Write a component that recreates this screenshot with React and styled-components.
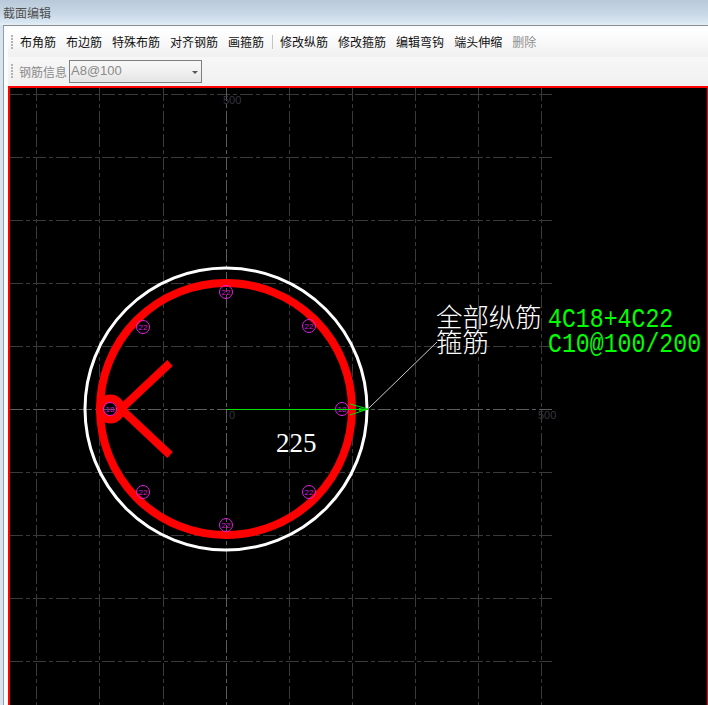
import React from 'react';
import styled, { createGlobalStyle } from 'styled-components';

const GlobalStyle = createGlobalStyle`
  html, body {
    margin: 0;
    padding: 0;
    height: 100%;
    overflow: hidden;
    background: #d6e4f1;
  }
`;

const CJK = '"Noto Sans CJK SC", sans-serif';

const Page = styled.div`
  width: 708px;
  height: 705px;
  display: flex;
  flex-direction: column;
  overflow: hidden;
  background: #d6e4f1;
  font-family: ${CJK};
`;

const TitleBar = styled.div`
  flex: 0 0 25px;
  display: flex;
  align-items: center;
  padding: 0 0 1px 3px;
  box-sizing: border-box;
  font-size: 12px;
  color: #4f4f4f;
  background: linear-gradient(to bottom, #bac9d9 0%, #c9d8e6 55%, #d9e7f3 90%, #e6f0f8 100%);
`;

const Frame = styled.div`
  flex: 1;
  min-height: 0;
  margin-left: 3px;
  display: flex;
  flex-direction: column;
  border-top: 1px solid #8c8c8c;
  border-left: 1px solid #9a9a9a;
  padding: 3px 0 0 4px;
  background: #fbfcfd;
`;

const ToolRow = styled.div`
  display: flex;
  align-items: center;
  height: ${({ $height }) => $height}px;
  flex: none;
  padding: 0 0 ${({ $top }) => ($top ? 2 : 0)}px 3px;
  box-sizing: border-box;
  background: ${({ $top }) => ($top
    ? 'linear-gradient(to bottom, #ffffff 0%, #f9f9f9 45%, #f0f0f0 100%)'
    : 'linear-gradient(to bottom, #f7f7f7 0%, #f0f0f0 100%)')};
`;

const Grip = styled.span`
  flex: none;
  width: 2px;
  height: 15px;
  margin-right: 2px;
  background: repeating-linear-gradient(to bottom, #b4b4b4 0 2px, transparent 2px 3px);
`;

const ToolItem = styled.span`
  flex: none;
  padding: 0 5px;
  font-size: 12px;
  line-height: 16px;
  color: ${({ $disabled }) => ($disabled ? '#8f8f8f' : '#101010')};
`;

const Separator = styled.span`
  flex: none;
  width: 1px;
  height: 14px;
  margin: 0 2px 0 3px;
  background: #c4c4c4;
`;

const Label = styled.span`
  flex: none;
  width: 54px;
  padding-left: 4px;
  box-sizing: border-box;
  font-size: 12px;
  color: #8a8a8a;
  white-space: nowrap;
`;

const Combo = styled.div`
  flex: none;
  width: 133px;
  height: 23px;
  box-sizing: border-box;
  border: 1px solid #7f7f7f;
  display: flex;
  align-items: center;
  justify-content: space-between;
  padding: 0 3px 2px 1px;
  font-family: "Liberation Sans", sans-serif;
  font-size: 13px;
  color: #8a8a8a;
  background: linear-gradient(to bottom, #f8f8f8 0%, #f0f0f0 50%, #e4e4e4 100%);
`;

const ComboArrow = styled.span`
  width: 0;
  height: 0;
  margin-top: 3px;
  border-left: 3px solid transparent;
  border-right: 3px solid transparent;
  border-top: 3px solid #555;
`;

const Viewport = styled.div`
  flex: 1;
  min-height: 0;
  border-top: 2px solid #ff0000;
  border-left: 2px solid #ff0000;
  border-right: 1px solid #ff0000;
  background: #000;
  overflow: hidden;
`;

const Drawing = styled.svg`
  display: block;
`;

const AxisLabel = styled.text`
  font-family: "Liberation Sans", sans-serif;
  font-size: 11px;
  fill: #34383e;
`;

const BarLabel = styled.text`
  font-family: "Liberation Sans", sans-serif;
  font-size: 8px;
  fill: #d818d8;
  text-anchor: middle;
`;

const NoteName = styled.text`
  font-family: ${CJK};
  font-size: 26.4px;
  font-weight: 300;
  fill: #ffffff;
`;

const NoteValue = styled.text`
  font-family: "Liberation Mono", monospace;
  font-size: 23.2px;
  fill: #00ff00;
`;

const Dimension = styled.text`
  font-family: "Liberation Serif", serif;
  font-size: 27px;
  fill: #ffffff;
`;

const tools = ['布角筋', '布边筋', '特殊布筋', '对齐钢筋', '画箍筋', null, '修改纵筋', '修改箍筋', '编辑弯钩', '端头伸缩'];

const gridX = [36, 99, 163, 226, 289, 352, 415, 478, 541];
const gridY = [94, 157, 220, 283, 346, 409, 472, 535, 598, 661];

const bars = [
  { x: 226, y: 292, d: 22 },
  { x: 309, y: 326, d: 22 },
  { x: 342, y: 409, d: 18 },
  { x: 309, y: 492, d: 22 },
  { x: 226, y: 525, d: 22 },
  { x: 143, y: 492, d: 22 },
  { x: 143, y: 327, d: 22 },
  { x: 110, y: 409, d: 18 },
];

const Section = () => (
  <Drawing width="697" height="617" viewBox="10 88 697 617">
    {gridY.map((y) => (
      <line key={y} x1="10" x2="552" y1={y + 0.5} y2={y + 0.5}
        stroke={y === 409 ? '#5c5c5c' : '#3a3a3a'} strokeDasharray="13 3 4 3" />
    ))}
    {gridX.map((x) => (
      <line key={x} x1={x + 0.5} x2={x + 0.5} y1="88" y2="705"
        stroke={x === 226 ? '#5c5c5c' : '#3a3a3a'} strokeDasharray="13 3 4 3" />
    ))}

    <AxisLabel x="223" y="104">500</AxisLabel>
    <AxisLabel x="229" y="419">0</AxisLabel>
    <AxisLabel x="538" y="419">500</AxisLabel>

    <circle cx="226" cy="409" r="141" fill="none" stroke="#ffffff" strokeWidth="3" />
    <circle cx="226" cy="409" r="126" fill="none" stroke="#ff0000" strokeWidth="8" />

    <circle cx="110.5" cy="409" r="10.5" fill="none" stroke="#ff0000" strokeWidth="8" />
    <path d="M170 363 L121 409 L170 455" fill="none" stroke="#ff0000" strokeWidth="8" strokeLinejoin="miter" />

    {bars.map((b) => (
      <g key={`${b.x}-${b.y}`}>
        <circle cx={b.x} cy={b.y} r="6.5" fill="none" stroke="#e020e0" strokeWidth="1" />
        <BarLabel x={b.x} y={b.y + 3}>{b.d}</BarLabel>
      </g>
    ))}

    <line x1="226" x2="368" y1="409.5" y2="409.5" stroke="#00e000" />
    <path d="M350 404 L368 409 L350 415" fill="none" stroke="#00e000" />
    <path d="M359 408 L369 409.5 L359 411 Z" fill="#00e000" />
    <line x1="369" y1="408" x2="437" y2="342" stroke="#ffffff" strokeWidth="0.8" />

    <NoteName x="436" y="327">全部纵筋</NoteName>
    <NoteName x="436" y="352">箍筋</NoteName>
    <NoteValue transform="translate(548 327) scale(1 1.2)">4C18+4C22</NoteValue>
    <NoteValue transform="translate(548 352) scale(1 1.2)">C10@100/200</NoteValue>
    <Dimension x="276" y="452">225</Dimension>
  </Drawing>
);

export default function App() {
  return (
    <Page>
      <GlobalStyle />
      <TitleBar>截面编辑</TitleBar>
      <Frame>
        <ToolRow $top $height={28}>
          <Grip />
          {tools.map((t, i) => (t ? <ToolItem key={t}>{t}</ToolItem> : <Separator key={i} />))}
          <ToolItem $disabled>删除</ToolItem>
        </ToolRow>
        <ToolRow $height={29}>
          <Grip />
          <Label>钢筋信息</Label>
          <Combo>
            A8@100
            <ComboArrow />
          </Combo>
        </ToolRow>
        <Viewport>
          <Section />
        </Viewport>
      </Frame>
    </Page>
  );
}
